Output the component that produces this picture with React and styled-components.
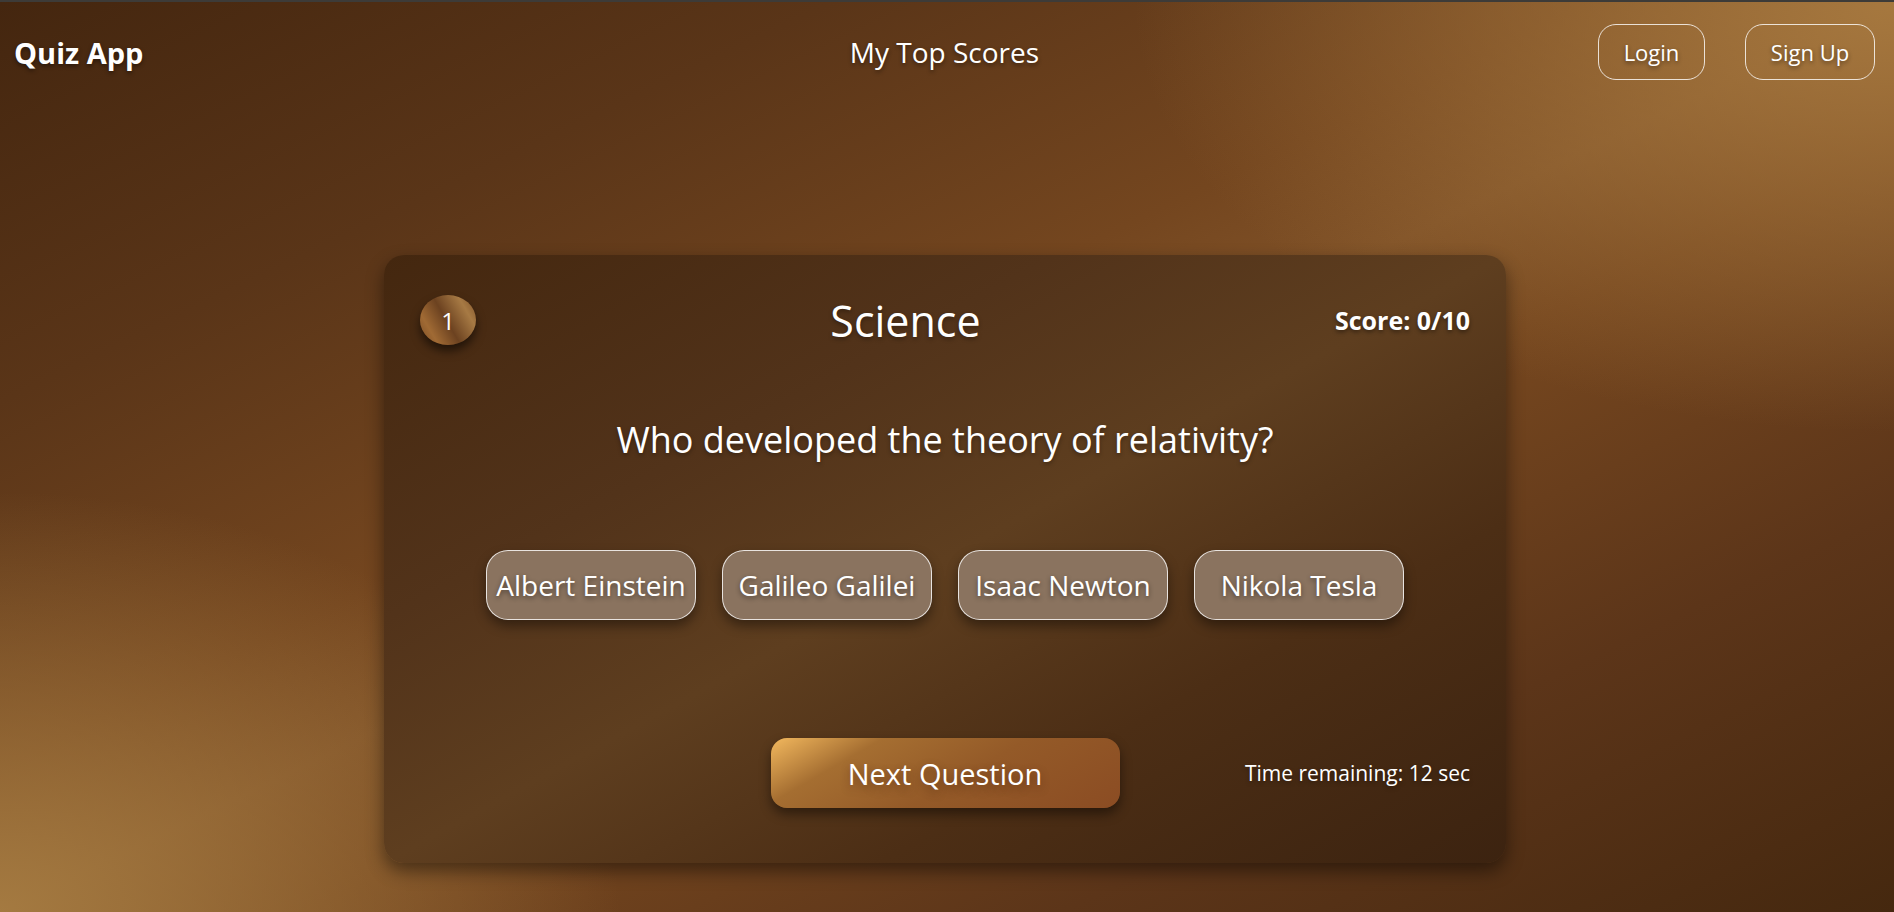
import styled, { createGlobalStyle } from "styled-components";

const GlobalStyle = createGlobalStyle`
  html, body {
    margin: 0;
    padding: 0;
  }
  body {
    font-family: "Open Sans", "Noto Sans", sans-serif;
    color: #fff;
  }
  * {
    box-sizing: border-box;
  }
`;

const Page = styled.div`
  min-height: 100vh;
  border-top: 2px solid #3d3b38;
  background:
    radial-gradient(760px 430px at 100% 0%, rgba(168, 122, 64, 0.95), rgba(168, 122, 64, 0) 100%),
    radial-gradient(620px 420px at 0% 100%, rgba(166, 124, 66, 0.95), rgba(166, 124, 66, 0) 100%),
    linear-gradient(
      to bottom right,
      #44260f 0%,
      #5a3518 22%,
      #74461f 42%,
      #7f5127 50%,
      #76471f 58%,
      #5c3519 78%,
      #45280f 100%
    );
  overflow: hidden;
`;

const Nav = styled.nav`
  display: grid;
  grid-template-columns: 1fr auto 1fr;
  align-items: center;
  padding: 21px 19px 0 14px;
  height: 79px;
`;

const Brand = styled.div`
  font-size: 29px;
  font-weight: 700;
  text-shadow: 0 2px 4px rgba(0, 0, 0, 0.45);
`;

const NavLink = styled.div`
  font-size: 28px;
  text-shadow: 0 2px 4px rgba(0, 0, 0, 0.45);
`;

const NavActions = styled.div`
  display: flex;
  justify-content: flex-end;
  gap: 40px;
`;

const NavButton = styled.button`
  height: 56px;
  width: ${(p) => p.$w}px;
  border: 1px solid rgba(255, 255, 255, 0.8);
  border-radius: 18px;
  background: transparent;
  color: #fff;
  font-family: inherit;
  font-size: 22px;
  padding: 0;
  text-shadow: 0 2px 4px rgba(0, 0, 0, 0.45);
  cursor: pointer;
`;

const Main = styled.main`
  padding-top: 174px;
  padding-bottom: 40px;
`;

const Card = styled.section`
  width: 1122px;
  margin: 0 auto;
  transform: translateX(-2px);
  padding: 40px 36px 55px;
  border-radius: 20px;
  background: linear-gradient(
    to bottom right,
    #44270f 0%,
    #52331a 30%,
    #5e3e1f 50%,
    #4c2e15 72%,
    #3c2310 100%
  );
  box-shadow: 0 8px 18px rgba(0, 0, 0, 0.45);
`;

const Header = styled.div`
  display: flex;
  justify-content: space-between;
  align-items: center;
  height: 50px;
`;

const Badge = styled.div`
  width: 56px;
  height: 50px;
  border-radius: 50%;
  display: flex;
  align-items: center;
  justify-content: center;
  font-size: 24px;
  background: linear-gradient(
    60deg,
    #7a4c24 0%,
    #a06a34 22%,
    #6c4220 48%,
    #a77a44 78%,
    #7d5028 100%
  );
  box-shadow: 0 6px 10px rgba(0, 0, 0, 0.55);
`;

const Category = styled.h2`
  margin: 0;
  font-size: 43px;
  font-weight: 400;
  text-shadow: 0 2px 4px rgba(0, 0, 0, 0.35);
`;

const Score = styled.div`
  font-size: 25px;
  font-weight: 700;
  text-shadow: 0 2px 4px rgba(0, 0, 0, 0.45);
`;

const Question = styled.p`
  margin: 71px 0 0;
  text-align: center;
  font-size: 36px;
  line-height: 48px;
  text-shadow: 0 2px 4px rgba(0, 0, 0, 0.35);
`;

const Options = styled.div`
  margin-top: 86px;
  display: flex;
  justify-content: center;
  gap: 26px;
`;

const Option = styled.button`
  width: 210px;
  height: 70px;
  border: 1px solid rgba(255, 255, 255, 0.8);
  border-radius: 22px;
  background: #8a735f;
  color: #fff;
  font-family: inherit;
  font-size: 28px;
  padding: 0;
  white-space: nowrap;
  text-shadow: 0 2px 5px rgba(0, 0, 0, 0.45);
  box-shadow: 0 6px 12px rgba(0, 0, 0, 0.4);
  cursor: pointer;
`;

const Footer = styled.div`
  margin-top: 118px;
  display: grid;
  grid-template-columns: 1fr auto 1fr;
  align-items: center;
`;

const NextButton = styled.button`
  grid-column: 2;
  width: 349px;
  height: 70px;
  border: none;
  border-radius: 16px;
  background: linear-gradient(
    150deg,
    #f2b85e 0%,
    #a56e31 24%,
    #945a28 55%,
    #8b4c23 100%
  );
  color: #fff;
  font-family: inherit;
  font-size: 29px;
  padding: 0;
  text-shadow: 0 4px 10px rgba(60, 25, 5, 0.45);
  box-shadow: 0 6px 12px rgba(0, 0, 0, 0.45);
  cursor: pointer;
`;

const Timer = styled.div`
  justify-self: end;
  font-size: 21px;
  text-shadow: 0 2px 4px rgba(0, 0, 0, 0.35);
`;

const options = ["Albert Einstein", "Galileo Galilei", "Isaac Newton", "Nikola Tesla"];

export default function App() {
  return (
    <Page>
      <GlobalStyle />
      <Nav>
        <Brand>Quiz App</Brand>
        <NavLink>My Top Scores</NavLink>
        <NavActions>
          <NavButton $w={107}>Login</NavButton>
          <NavButton $w={130}>Sign Up</NavButton>
        </NavActions>
      </Nav>
      <Main>
        <Card>
          <Header>
            <Badge>1</Badge>
            <Category>Science</Category>
            <Score>Score: 0/10</Score>
          </Header>
          <Question>Who developed the theory of relativity?</Question>
          <Options>
            {options.map((o) => (
              <Option key={o}>{o}</Option>
            ))}
          </Options>
          <Footer>
            <NextButton>Next Question</NextButton>
            <Timer>Time remaining: 12 sec</Timer>
          </Footer>
        </Card>
      </Main>
    </Page>
  );
}
